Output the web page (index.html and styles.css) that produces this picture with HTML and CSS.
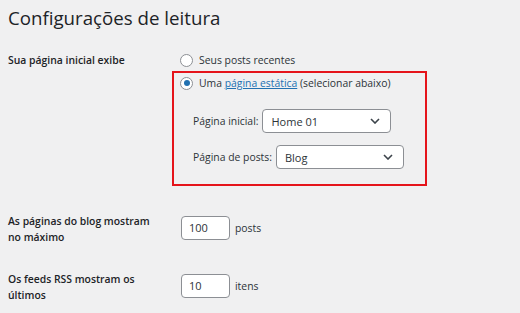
FILE: index.html
```html
<!DOCTYPE html>
<html lang="pt-BR">
<head>
	<meta charset="UTF-8">
	<title>Configurações de leitura</title>
	<link rel="stylesheet" href="styles.css">
</head>
<body>
	<h1 class="title">Configurações de leitura</h1>

	<div class="row row-front">
		<div class="label">Sua página inicial exibe</div>
		<div class="field">
			<div class="option">
				<span class="radio"></span>
				<span>Seus posts recentes</span>
			</div>
			<div class="highlight">
				<div class="option">
					<span class="radio checked"></span>
					<span>Uma <a href="#" class="link">página estática</a> (selecionar abaixo)</span>
				</div>
				<div class="pick">
					<span>Página inicial:</span>
					<div class="select select-home">
						<span>Home 01</span>
						<svg class="chev" width="10" height="6" viewBox="0 0 10 6"><path d="M1 1l4 4 4-4" fill="none" stroke="#3c434a" stroke-width="1.6"/></svg>
					</div>
				</div>
				<div class="pick">
					<span>Página de posts:</span>
					<div class="select select-posts">
						<span>Blog</span>
						<svg class="chev" width="10" height="6" viewBox="0 0 10 6"><path d="M1 1l4 4 4-4" fill="none" stroke="#3c434a" stroke-width="1.6"/></svg>
					</div>
				</div>
			</div>
		</div>
	</div>

	<div class="row row-num">
		<div class="label">As páginas do blog mostram no máximo</div>
		<div class="field inline">
			<div class="num">100</div>
			<span>posts</span>
		</div>
	</div>

	<div class="row row-num">
		<div class="label">Os feeds RSS mostram os últimos</div>
		<div class="field inline">
			<div class="num">10</div>
			<span>itens</span>
		</div>
	</div>
</body>
</html>
```

FILE: styles.css
```css
*{
	margin:0;
	padding:0;
	box-sizing:border-box;
}
body{
	background:#f0f0f1;
	color:#1d2327;
	font-family:"Open Sans", "Noto Sans", sans-serif;
	font-size:10.4px;
	padding:0 8px;
	width:520px;
	height:313px;
	overflow:hidden;
}
.title{
	font-size:18.7px;
	font-weight:400;
	line-height:26px;
	padding-top:5px;
	color:#1d2327;
}
.row{
	display:grid;
	grid-template-columns:164px 1fr;
}
.row-front{
	margin-top:21px;
}
.label{
	font-weight:600;
	line-height:16px;
	color:#1d2327;
	padding-right:12px;
}
.option{
	display:flex;
	align-items:center;
	gap:6px;
	height:16px;
	padding-left:8px;
	color:#2c3338;
}
.radio{
	width:13px;
	height:13px;
	border:1px solid #8c8f94;
	border-radius:50%;
	background:#fff;
	display:flex;
	align-items:center;
	justify-content:center;
}
.radio.checked::after{
	content:"";
	width:6px;
	height:6px;
	border-radius:50%;
	background:#2271b1;
}
.link{
	color:#2271b1;
}
.highlight{
	margin-top:3px;
	width:255px;
	height:115px;
	border:2px solid #e5141b;
	padding-top:2px;
}
.highlight .option{
	padding-left:6px;
}
.pick{
	display:flex;
	align-items:center;
	gap:4px;
	padding-left:19px;
	color:#2c3338;
}
.pick + .pick{
	margin-top:12px;
}
.highlight .option + .pick{
	margin-top:18px;
}
.select{
	height:24px;
	background:#fff;
	border:1px solid #8c8f94;
	border-radius:4px;
	display:flex;
	align-items:center;
	justify-content:space-between;
	padding:0 10px 0 8px;
	color:#2c3338;
	font-size:11px;
}
.select-home{
	width:129px;
}
.select-posts{
	width:128px;
}
.row-num{
	margin-top:30px;
}
.row-num + .row-num{
	margin-top:29px;
}
.row-num .label{
	margin-top:-3px;
}
.inline{
	display:flex;
	align-items:flex-start;
	gap:5px;
	padding-left:9px;
	color:#2c3338;
}
.inline span{
	line-height:24px;
}
.num{
	width:49px;
	height:24px;
	background:#fff;
	border:1px solid #8c8f94;
	border-radius:4px;
	padding-left:7px;
	line-height:22px;
	font-size:11px;
}
```
